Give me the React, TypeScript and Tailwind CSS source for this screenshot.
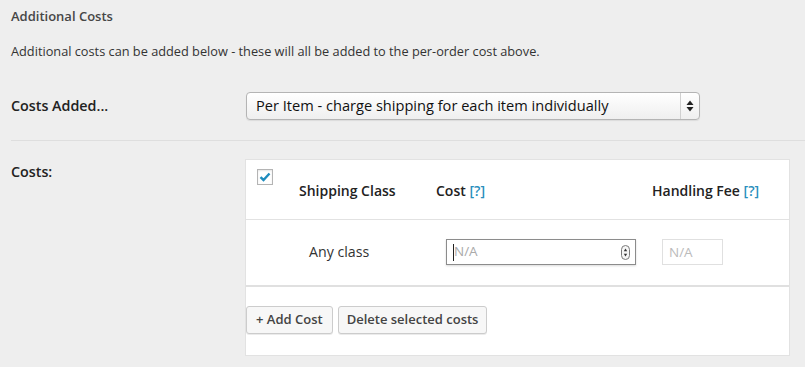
import React from "react";

function Spinner() {
  return (
    <svg width="9" height="15" viewBox="0 0 9 15" className="block">
      <rect x="0.5" y="0.5" width="8" height="14" rx="4" fill="#f6f6f6" stroke="#7a7a7a" />
      <path d="M4.5 3.6 L6.2 6.2 H2.8 Z" fill="#333" />
      <path d="M4.5 11.4 L6.2 8.8 H2.8 Z" fill="#333" />
    </svg>
  );
}

export default function App() {
  return (
    <div
      className="w-[805px] h-[367px] bg-[#eeeeee] text-[#333] overflow-hidden"
      style={{ fontFamily: '"Open Sans", "Noto Sans", sans-serif' }}
    >
      <div className="pl-[11px] pt-[7px]">
        <h3 className="text-[13px] font-semibold text-[#464646] leading-[18px]">Additional Costs</h3>
        <p className="mt-[17px] text-[12.75px] leading-[18px] text-[#333]">
          Additional costs can be added below - these will all be added to the per-order cost above.
        </p>
        <div className="flex items-center mt-[32px]">
          <div className="w-[235px] text-[14.3px] font-semibold text-[#222] leading-[20px]">Costs Added...</div>
          <div className="w-[454px] h-[28px] flex items-stretch rounded-[4px] border border-[#b4b4b4] bg-gradient-to-b from-white to-[#efefef] shadow-[0_1px_1px_rgba(0,0,0,0.08)]">
            <div className="flex-1 flex items-center pl-[9px] text-[14.6px] text-[#111]">
              Per Item - charge shipping for each item individually
            </div>
            <div className="w-[19px] border-l border-[#d0d0d0] flex items-center justify-center">
              <svg width="8" height="12" viewBox="0 0 8 12">
                <path d="M4 0.5 L7.5 5 H0.5 Z" fill="#222" />
                <path d="M4 11.5 L7.5 7 H0.5 Z" fill="#222" />
              </svg>
            </div>
          </div>
        </div>
        <div className="mt-[20px] border-t border-[#dedede]" />
        <div className="flex mt-[18px]">
          <div className="w-[234px] pt-[3px] text-[14.3px] font-semibold text-[#222] leading-[20px]">Costs:</div>
          <div className="w-[545px] h-[197px] bg-white border border-[#e2e2e2] flex flex-col">
            <div className="h-[60px] flex border-b border-[#e2e2e2] relative">
              <div className="absolute left-[11px] top-[9px] w-[16px] h-[16px] border border-[#b4b4b4] bg-white flex items-center justify-center shadow-[inset_0_1px_2px_rgba(0,0,0,0.1)]">
                <svg width="12" height="10" viewBox="0 0 12 10">
                  <path d="M1.5 5.2 L4.5 8 L10.5 1.5" stroke="#1e8cbe" strokeWidth="2.4" fill="none" />
                </svg>
              </div>
              <div className="flex items-center w-full pt-[1px] text-[14px] font-semibold text-[#222]">
                <div className="ml-[53px] w-[137px]">Shipping Class</div>
                <div className="w-[216px]">
                  Cost <span className="text-[#2a8fbd]">[?]</span>
                </div>
                <div>
                  Handling Fee <span className="text-[#2a8fbd]">[?]</span>
                </div>
              </div>
            </div>
            <div className="h-[67px] flex items-start pt-[19px] border-b-2 border-[#e0e0e0]">
              <div className="ml-[63px] w-[137px] h-[26px] flex items-center text-[14.2px] text-[#333]">Any class</div>
              <div className="w-[190px] h-[26px] border border-[#8c8c8c] shadow-[0_1px_2px_rgba(0,0,0,0.15)] flex items-center pl-[6px] pr-[5px]">
                <div className="w-px h-[17px] bg-[#222]" />
                <span className="flex-1 text-[13.5px] text-[#aaa] leading-none">N/A</span>
                <Spinner />
              </div>
              <div className="ml-[26px] w-[61px] h-[26px] border border-[#e0e0e0] flex items-center pl-[6px] text-[13.5px] text-[#bbb]">
                N/A
              </div>
            </div>
            <div className="flex-1 flex items-start pt-[19px] gap-[5px]">
              <button className="h-[28px] px-[9px] rounded-[3px] border border-[#ccc] bg-[#f7f7f7] shadow-[0_1px_0_rgba(0,0,0,0.08)] text-[13px] font-semibold text-[#444]">
                + Add Cost
              </button>
              <button className="h-[28px] px-[8px] rounded-[3px] border border-[#ccc] bg-[#f7f7f7] shadow-[0_1px_0_rgba(0,0,0,0.08)] text-[13px] font-semibold text-[#444]">
                Delete selected costs
              </button>
            </div>
          </div>
        </div>
      </div>
    </div>
  );
}
